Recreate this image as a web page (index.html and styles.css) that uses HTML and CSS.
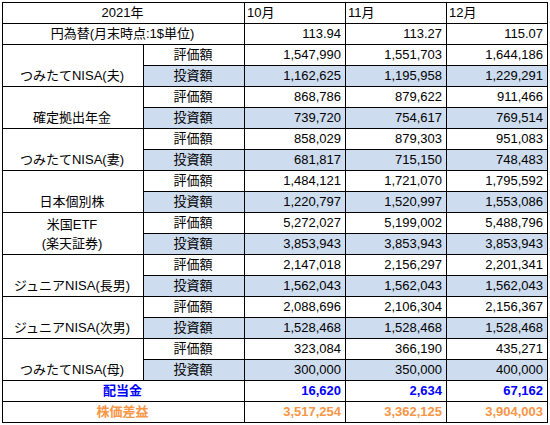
FILE: index.html
```html
<!DOCTYPE html>
<html lang="ja">
<head>
  <meta charset="UTF-8">
  <meta name="viewport" content="width=device-width, initial-scale=1.0">
  <title>資産推移 2021年</title>
  <link rel="stylesheet" href="styles.css">
</head>
<body>
  <table class="sheet">
    <colgroup>
      <col class="col-name">
      <col class="col-label">
      <col class="col-month">
      <col class="col-month">
      <col class="col-month">
    </colgroup>
    <tr>
      <td colspan="2" class="center">2021年</td>
      <td class="month">10月</td>
      <td class="month">11月</td>
      <td class="month">12月</td>
    </tr>
    <tr>
      <td colspan="2" class="center">円為替(月末時点:1$単位)</td>
      <td class="num">113.94</td>
      <td class="num">113.27</td>
      <td class="num">115.07</td>
    </tr>

    <tr>
      <td rowspan="2" class="name">つみたてNISA(夫)</td>
      <td class="label">評価額</td>
      <td class="num">1,547,990</td>
      <td class="num">1,551,703</td>
      <td class="num">1,644,186</td>
    </tr>
    <tr class="invest">
      <td class="label">投資額</td>
      <td class="num">1,162,625</td>
      <td class="num">1,195,958</td>
      <td class="num">1,229,291</td>
    </tr>

    <tr>
      <td rowspan="2" class="name">確定拠出年金</td>
      <td class="label">評価額</td>
      <td class="num">868,786</td>
      <td class="num">879,622</td>
      <td class="num">911,466</td>
    </tr>
    <tr class="invest">
      <td class="label">投資額</td>
      <td class="num">739,720</td>
      <td class="num">754,617</td>
      <td class="num">769,514</td>
    </tr>

    <tr>
      <td rowspan="2" class="name">つみたてNISA(妻)</td>
      <td class="label">評価額</td>
      <td class="num">858,029</td>
      <td class="num">879,303</td>
      <td class="num">951,083</td>
    </tr>
    <tr class="invest">
      <td class="label">投資額</td>
      <td class="num">681,817</td>
      <td class="num">715,150</td>
      <td class="num">748,483</td>
    </tr>

    <tr>
      <td rowspan="2" class="name">日本個別株</td>
      <td class="label">評価額</td>
      <td class="num">1,484,121</td>
      <td class="num">1,721,070</td>
      <td class="num">1,795,592</td>
    </tr>
    <tr class="invest">
      <td class="label">投資額</td>
      <td class="num">1,220,797</td>
      <td class="num">1,520,997</td>
      <td class="num">1,553,086</td>
    </tr>

    <tr>
      <td rowspan="2" class="name two-line">米国ETF<br>(楽天証券)</td>
      <td class="label">評価額</td>
      <td class="num">5,272,027</td>
      <td class="num">5,199,002</td>
      <td class="num">5,488,796</td>
    </tr>
    <tr class="invest">
      <td class="label">投資額</td>
      <td class="num">3,853,943</td>
      <td class="num">3,853,943</td>
      <td class="num">3,853,943</td>
    </tr>

    <tr>
      <td rowspan="2" class="name">ジュニアNISA(長男)</td>
      <td class="label">評価額</td>
      <td class="num">2,147,018</td>
      <td class="num">2,156,297</td>
      <td class="num">2,201,341</td>
    </tr>
    <tr class="invest">
      <td class="label">投資額</td>
      <td class="num">1,562,043</td>
      <td class="num">1,562,043</td>
      <td class="num">1,562,043</td>
    </tr>

    <tr>
      <td rowspan="2" class="name">ジュニアNISA(次男)</td>
      <td class="label">評価額</td>
      <td class="num">2,088,696</td>
      <td class="num">2,106,304</td>
      <td class="num">2,156,367</td>
    </tr>
    <tr class="invest">
      <td class="label">投資額</td>
      <td class="num">1,528,468</td>
      <td class="num">1,528,468</td>
      <td class="num">1,528,468</td>
    </tr>

    <tr>
      <td rowspan="2" class="name">つみたてNISA(母)</td>
      <td class="label">評価額</td>
      <td class="num">323,084</td>
      <td class="num">366,190</td>
      <td class="num">435,271</td>
    </tr>
    <tr class="invest">
      <td class="label">投資額</td>
      <td class="num">300,000</td>
      <td class="num">350,000</td>
      <td class="num">400,000</td>
    </tr>

    <tr class="dividend">
      <td colspan="2" class="center">配当金</td>
      <td class="num">16,620</td>
      <td class="num">2,634</td>
      <td class="num">67,162</td>
    </tr>
    <tr class="gain">
      <td colspan="2" class="center">株価差益</td>
      <td class="num">3,517,254</td>
      <td class="num">3,362,125</td>
      <td class="num">3,904,003</td>
    </tr>
  </table>
</body>
</html>
```

FILE: styles.css
```css
body {
  margin: 0;
  padding: 2px 0 0 2px;
  background-color: #fff;
  color: #000;
  font-family: "Liberation Sans", "Noto Sans CJK JP", sans-serif;
  font-size: 13px;
}

.sheet {
  border-collapse: collapse;
  table-layout: fixed;
}

.col-name {
  width: 141px;
}

.col-label,
.col-month {
  width: 101px;
}

.sheet td {
  border: 1px solid #000;
  height: 20px;
  padding: 0 4px 0 2px;
  line-height: 18px;
  white-space: nowrap;
  vertical-align: middle;
  overflow: hidden;
}

.center,
.label {
  text-align: center;
}

.month {
  text-align: left;
}

.num {
  text-align: right;
}

.name {
  text-align: center;
  vertical-align: bottom !important;
  padding-bottom: 1px !important;
}

.two-line {
  line-height: 19px !important;
}

.invest td {
  background-color: #cddcef;
}

.dividend td {
  color: #0000ff;
  font-weight: bold;
}

.gain td {
  color: #f79646;
  font-weight: bold;
}
```
